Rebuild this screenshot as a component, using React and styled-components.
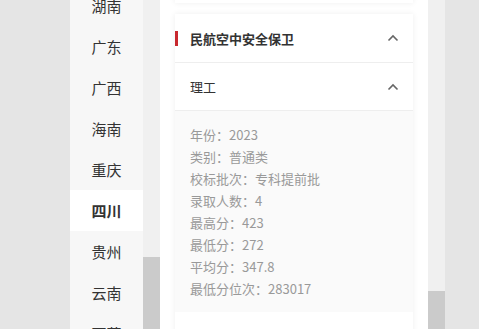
import styled, { createGlobalStyle } from 'styled-components'

const provinces = ['湖南', '广东', '广西', '海南', '重庆', '四川', '贵州', '云南', '西藏']

const details = [
	['年份', '2023'],
	['类别', '普通类'],
	['校标批次', '专科提前批'],
	['录取人数', '4'],
	['最高分', '423'],
	['最低分', '272'],
	['平均分', '347.8'],
	['最低分位次', '283017'],
]

function Chevron() {
	return (
		<svg width="12" height="8" viewBox="0 0 12 8">
			<path
				d="M1.5 6.5 L6 2 L10.5 6.5"
				fill="none"
				stroke="#666"
				strokeWidth="1.6"
			/>
		</svg>
	)
}

export default function App() {
	return (
		<>
			<GlobalStyle />
			<Page>
				<Phone>
					<Sidebar>
						<ProvinceList>
							{provinces.map((p) => (
								<Province key={p} $active={p === '四川'}>
									{p}
								</Province>
							))}
						</ProvinceList>
					</Sidebar>
					<Track>
						<Thumb $top={257} />
					</Track>
					<Main>
						<StubCard />
						<Card>
							<Header>
								<Title>
									<Bar />
									民航空中安全保卫
								</Title>
								<Chevron />
							</Header>
							<SubHeader>
								<span>理工</span>
								<Chevron />
							</SubHeader>
							<Details>
								{details.map(([k, v]) => (
									<Line key={k}>
										{k}：{v}
									</Line>
								))}
							</Details>
						</Card>
					</Main>
					<Track>
						<Thumb $top={291} />
					</Track>
				</Phone>
			</Page>
		</>
	)
}

const GlobalStyle = createGlobalStyle`
	body {
		margin: 0;
		background: #e5e5e5;
		font-family: 'Noto Sans CJK SC', 'Noto Sans', sans-serif;
	}
`

const Page = styled.div`
	display: flex;
	height: 329px;
	padding-left: 70px;
	overflow: hidden;
`

const Phone = styled.div`
	display: flex;
	width: 375px;
	height: 100%;
`

const Sidebar = styled.div`
	width: 73px;
	background: #f7f7f7;
	overflow: hidden;
`

const ProvinceList = styled.div`
	display: flex;
	flex-direction: column;
	margin-top: -15px;
`

const Province = styled.div`
	height: 41px;
	display: flex;
	align-items: center;
	justify-content: center;
	font-size: 15px;
	color: #333;
	background: ${(p) => (p.$active ? '#fff' : 'transparent')};
	font-weight: ${(p) => (p.$active ? 700 : 400)};
	flex-shrink: 0;
`

const Track = styled.div`
	width: 17px;
	background: #f0f0f0;
	display: flex;
	flex-direction: column;
`

const Thumb = styled.div`
	margin-top: ${(p) => p.$top}px;
	flex: 1;
	background: #cbcbcb;
`

const Main = styled.div`
	width: 268px;
	background: #fff;
	padding: 0 15px;
	box-sizing: border-box;
	overflow: hidden;
`

const StubCard = styled.div`
	height: 40px;
	margin-top: -37px;
	margin-bottom: 11px;
	background: #fff;
	box-shadow: 0 0 6px rgba(0, 0, 0, 0.07);
`

const Card = styled.div`
	background: #fff;
	box-shadow: 0 0 6px rgba(0, 0, 0, 0.07);
	padding-bottom: 40px;
`

const Header = styled.div`
	height: 48px;
	display: flex;
	align-items: center;
	justify-content: space-between;
	padding-right: 14px;
	border-bottom: 1px solid #eee;
`

const Title = styled.div`
	display: flex;
	align-items: center;
	font-size: 13px;
	font-weight: 700;
	color: #333;
`

const Bar = styled.span`
	width: 3px;
	height: 15px;
	background: #c8282e;
	margin-right: 12px;
`

const SubHeader = styled.div`
	height: 47px;
	display: flex;
	align-items: center;
	justify-content: space-between;
	padding: 0 14px 0 15px;
	border-bottom: 1px solid #eee;
	font-size: 13px;
	color: #333;
`

const Details = styled.div`
	background: #fafafa;
	padding: 13px 15px 12px;
`

const Line = styled.div`
	font-size: 13px;
	line-height: 22px;
	color: #999;
`
